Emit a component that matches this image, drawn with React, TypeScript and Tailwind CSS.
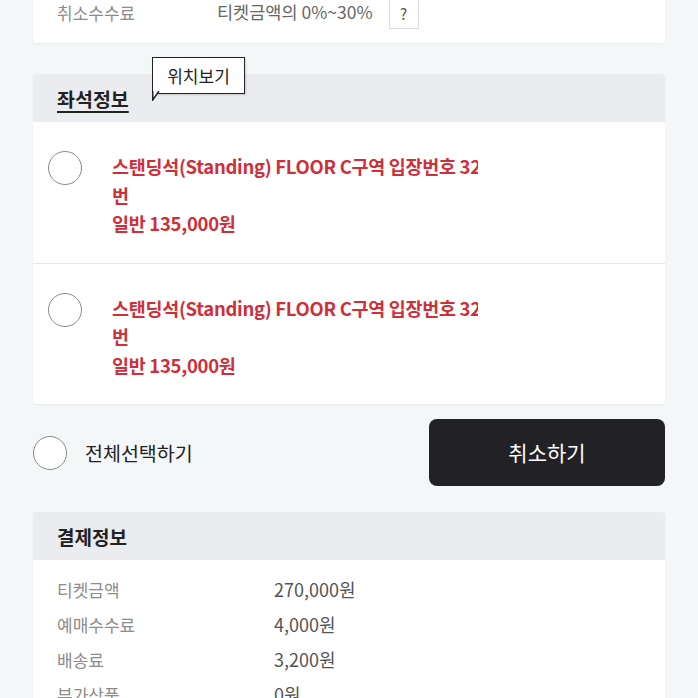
const FONT = { fontFamily: '"Noto Sans CJK KR", "Noto Sans", sans-serif' };

const seats = [
  { title: "스탠딩석(Standing) FLOOR C구역 입장번호 321", tail: "번", price: "일반 135,000원" },
  { title: "스탠딩석(Standing) FLOOR C구역 입장번호 322", tail: "번", price: "일반 135,000원" },
];

const payments = [
  ["티켓금액", "270,000원"],
  ["예매수수료", "4,000원"],
  ["배송료", "3,200원"],
  ["부가상품", "0원"],
];

function Circle() {
  return <div className="w-[34px] h-[34px] shrink-0 rounded-full border-[1.5px] border-[#8a8a8a] bg-white" />;
}

export default function App() {
  return (
    <div style={FONT} className="w-[698px] h-[698px] overflow-hidden bg-[#f4f7f8] px-[33px]">
      {/* cancel fee card (cut off at top) */}
      <div className="-mt-[4px] bg-white rounded-b-[3px] shadow-[0_1px_2px_rgba(0,0,0,0.05)] pl-[24px] pb-[14px] flex items-center">
        <span className="w-[160px] text-[17px] text-[#8c8c8c]">취소수수료</span>
        <span className="text-[17.5px] text-[#666]">티켓금액의 0%~30%</span>
        <span className="ml-[16px] w-[30px] h-[33px] flex items-center justify-center border border-[#dcdcdc] text-[15px] text-[#555] pt-[4px]">
          ?
        </span>
      </div>

      {/* seat info */}
      <div className="relative mt-[31px] bg-white rounded-[3px] shadow-[0_1px_2px_rgba(0,0,0,0.05)]">
        <div className="h-[48px] bg-[#eaecef] rounded-t-[3px] pl-[24px] flex items-center pt-[1px]">
          <span className="text-[19.5px] font-bold text-[#222] underline underline-offset-[4px] decoration-[1.5px]">좌석정보</span>
        </div>

        {/* tooltip */}
        <div className="absolute left-[119px] top-[-17px]">
          <div className="w-[93px] h-[37px] bg-white border-[1.5px] border-[#222] shadow-[1px_1px_2px_rgba(0,0,0,0.15)] flex items-center justify-center text-[17px] text-[#222]">
            위치보기
          </div>
          <svg className="absolute left-0 top-[34px]" width="8" height="10" viewBox="0 0 8 10">
            <path d="M0.75 0 L0.75 9 L7 0" fill="white" stroke="#222" strokeWidth="1.5" />
          </svg>
        </div>

        {seats.map((s, i) => (
          <div
            key={i}
            className={`flex items-start pl-[15px] pt-[30px] pb-[25px] ${i > 0 ? "border-t border-[#e4e6e8]" : ""}`}
          >
            <div className="mt-[-1px]">
              <Circle />
            </div>
            <div className="ml-[30px] text-[18.5px] font-bold text-[#cf2f38] leading-[28.5px] tracking-[-0.3px]">
              <div className="w-[366px] overflow-hidden whitespace-nowrap">{s.title}</div>
              <div>{s.tail}</div>
              <div>{s.price}</div>
            </div>
          </div>
        ))}
      </div>

      {/* select all + cancel */}
      <div className="pt-[15px] pb-[26px] flex items-center justify-between">
        <div className="flex items-center">
          <Circle />
          <span className="ml-[18px] text-[19.5px] text-[#222]">전체선택하기</span>
        </div>
        <button className="w-[236px] h-[67px] rounded-[8px] bg-[#222226] text-white text-[21px]">취소하기</button>
      </div>

      {/* payment info */}
      <div className="bg-white rounded-[3px] shadow-[0_1px_2px_rgba(0,0,0,0.05)]">
        <div className="h-[48px] bg-[#eaecef] rounded-t-[3px] pl-[24px] flex items-center pt-[2px]">
          <span className="text-[19px] font-bold text-[#222]">결제정보</span>
        </div>
        <div className="pl-[24px] pt-[12px]">
          {payments.map(([k, v]) => (
            <div key={k} className="flex items-center h-[35px]">
              <span className="w-[217px] text-[17px] text-[#8c8c8c]">{k}</span>
              <span className="text-[18px] text-[#555]">{v}</span>
            </div>
          ))}
        </div>
      </div>
    </div>
  );
}
